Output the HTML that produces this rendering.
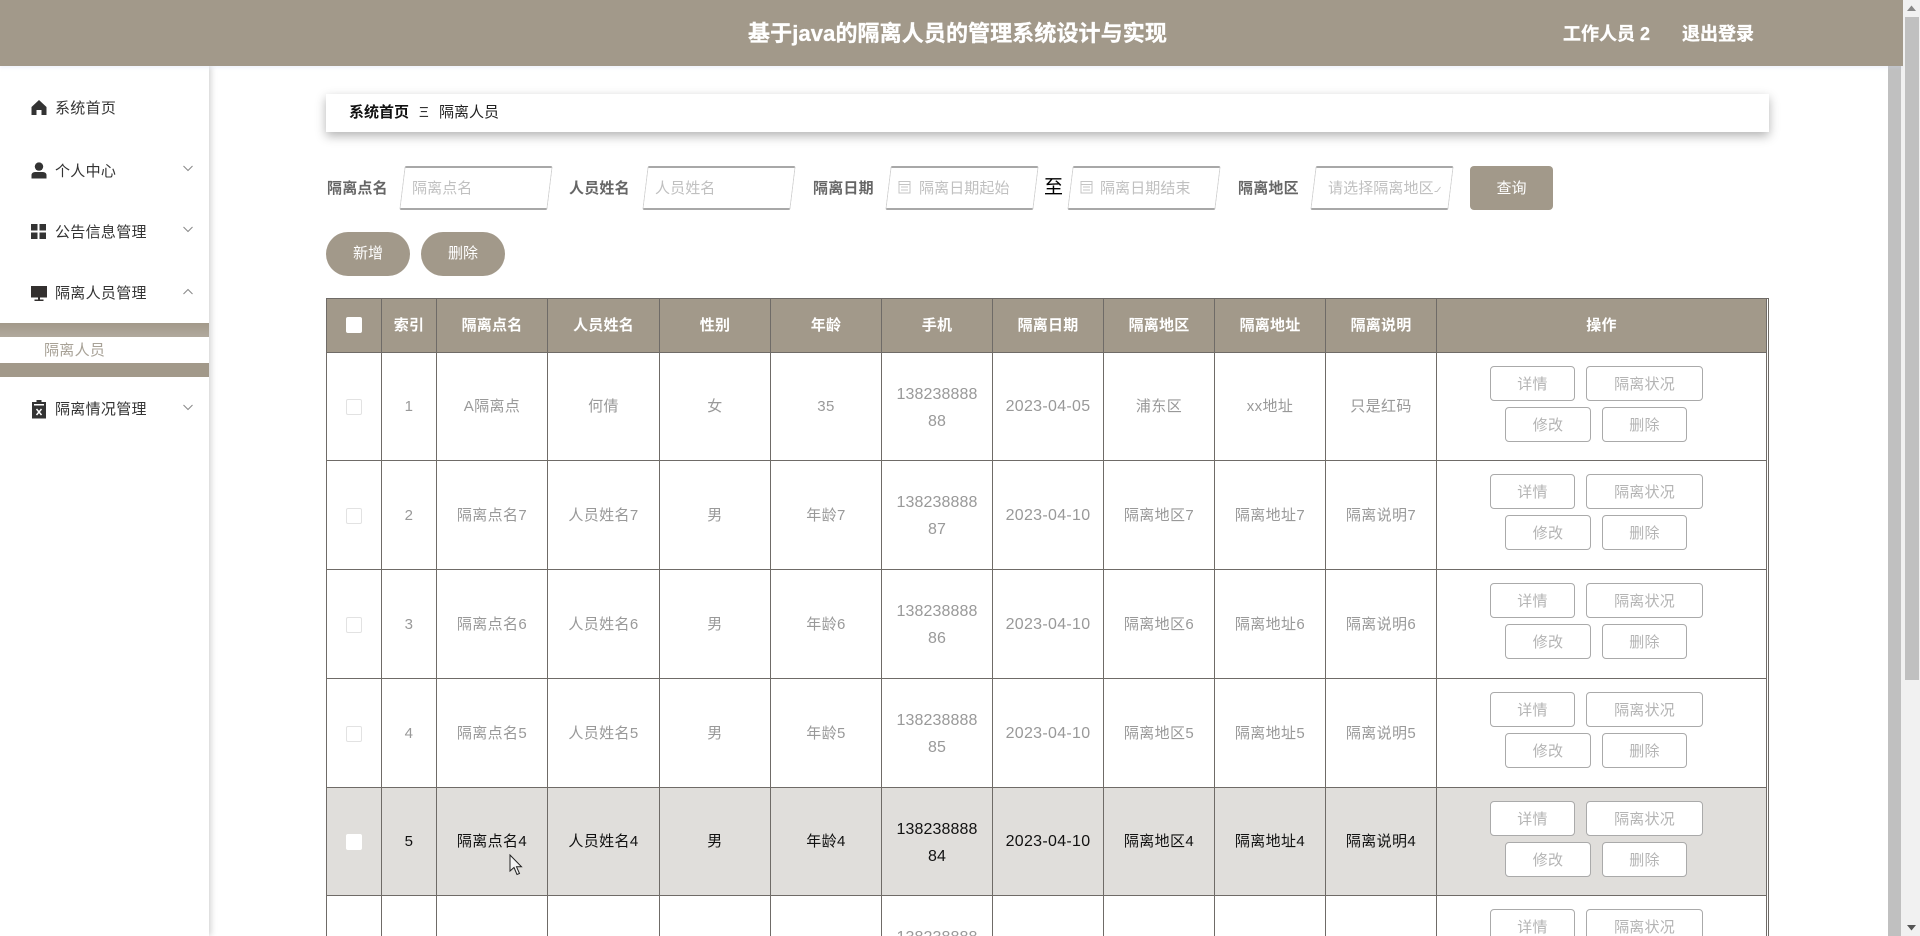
<!DOCTYPE html>
<html lang="zh">
<head>
<meta charset="utf-8">
<title>隔离人员</title>
<style>
html,body{margin:0;padding:0;width:1920px;height:936px;overflow:hidden;background:#fff;}
body{position:relative;font-family:"Liberation Sans","Noto Sans CJK SC",sans-serif;font-size:15px;color:#333;}
.a{position:absolute;white-space:nowrap;}
.hdr{left:0;top:0;width:1903px;height:66px;background:#a2998a;box-shadow:0 2px 3px rgba(200,210,240,.25);z-index:3;}
.side{left:0;top:66px;width:209px;height:870px;background:#fff;box-shadow:2px 0 6px rgba(0,0,0,.18);z-index:2;}
.mi{left:55px;line-height:22px;color:#333;font-size:15px;letter-spacing:.3px;z-index:4;}
.lb{font-weight:bold;color:#666;top:178px;line-height:22px;letter-spacing:.2px;}
.box{top:166px;height:40px;background:#fff;border-top:2px solid #a8a8a8;border-bottom:2px solid #a8a8a8;border-left:1px solid #cfcfcf;border-right:1px solid #cfcfcf;border-radius:2px;transform:skewX(-7deg);box-sizing:content-box;}
.ph{top:178px;line-height:22px;color:#c0c0c0;letter-spacing:.1px;}
.pill{top:232px;height:44px;width:84px;border-radius:22px;background:#a2998a;color:#fff;text-align:center;line-height:44px;}
table{position:absolute;left:326px;top:298px;border-collapse:collapse;table-layout:fixed;width:1440px;}
th,td{border:1px solid #6f6b67;text-align:center;vertical-align:middle;padding:0;font-size:15px;font-weight:normal;color:#999;position:relative;letter-spacing:.4px;}
th{background:#a2998a;color:#fff;font-weight:bold;height:51px;padding-bottom:2px;letter-spacing:.2px;}
td{line-height:27px;}
tr.h td{background:#e0dedb;color:#111;}
td.p{font-size:16px;letter-spacing:.1px;padding-top:2px;}
td.d{font-size:16px;letter-spacing:.3px;}
.cb{display:inline-block;width:14px;height:14px;border:1px solid #e2e2e2;border-radius:2px;background:#fff;vertical-align:middle;}
th .cb{border-color:#fff;}
tr.h .cb{border-color:#fff;}
.b{position:absolute;height:33px;line-height:35px;border:1px solid #aaa;border-radius:4px;background:#fff;color:#b4b4b4;box-sizing:content-box;letter-spacing:.2px;}
.b1{left:53px;top:12.5px;width:83px;}
.b2{left:149px;top:12.5px;width:115px;}
.b3{left:68px;top:53.5px;width:84px;}
.b4{left:165px;top:53.5px;width:83px;}
</style>
</head>
<body>
<div class="a hdr"></div>
<div class="a" style="left:0;top:16px;width:1915px;text-align:center;font-size:22px;font-weight:bold;color:#fff;line-height:36px;z-index:4;letter-spacing:.1px;-webkit-text-stroke:.3px #fff;">基于java的隔离人员的管理系统设计与实现</div>
<div class="a" style="left:1563px;top:21px;font-size:18px;font-weight:bold;color:#fff;line-height:26px;z-index:4;-webkit-text-stroke:.3px #fff;">工作人员 2</div>
<div class="a" style="left:1682px;top:21px;font-size:18px;font-weight:bold;color:#fff;line-height:26px;z-index:4;-webkit-text-stroke:.3px #fff;">退出登录</div>

<div class="a side"></div>
<svg class="a" style="left:31px;top:99px;z-index:4" width="16" height="17" viewBox="0 0 16 17"><path fill="#333" d="M8 1 L15.5 8 V16 H10.5 V11 H5.5 V16 H.5 V8 Z"/></svg>
<div class="a mi" style="top:98px;">系统首页</div>
<svg class="a" style="left:31px;top:162px;z-index:4" width="16" height="17" viewBox="0 0 16 17"><circle cx="8" cy="4.6" r="4.2" fill="#333"/><path fill="#333" d="M0.5 16.5 V13 C.5 11 2.5 10 4.5 10 H11.500 C13.500 10 15.500 11 15.500 13 V16.500 Z"/></svg>
<div class="a mi" style="top:161px;">个人中心</div>
<svg class="a" style="left:183px;top:165px;z-index:4" width="10" height="7" viewBox="0 0 10 7"><path d="M.5 1 L5 5.500 L9.500 1" fill="none" stroke="#888" stroke-width="1"/></svg>
<svg class="a" style="left:31px;top:224px;z-index:4" width="15" height="15" viewBox="0 0 15 15"><path fill="#333" d="M0 0H6.500V6.500H0ZM8.500 0H15V6.500H8.500ZM0 8.500H6.500V15H0ZM8.500 8.500H15V15H8.500Z"/></svg>
<div class="a mi" style="top:222px;">公告信息管理</div>
<svg class="a" style="left:183px;top:226px;z-index:4" width="10" height="7" viewBox="0 0 10 7"><path d="M.5 1 L5 5.500 L9.500 1" fill="none" stroke="#888" stroke-width="1"/></svg>
<svg class="a" style="left:31px;top:286px;z-index:4" width="16" height="16" viewBox="0 0 16 16"><path fill="#33302f" d="M0 0H16V11.500H0ZM7 11.500H9V13.500H12.500V15H3.500V13.500H7Z"/></svg>
<div class="a mi" style="top:283px;">隔离人员管理</div>
<svg class="a" style="left:183px;top:288px;z-index:4" width="10" height="7" viewBox="0 0 10 7"><path d="M.5 6 L5 1.500 L9.500 6" fill="none" stroke="#888" stroke-width="1"/></svg>
<div class="a" style="left:0;top:323px;width:209px;height:14px;background:linear-gradient(#a2998a,#b0a99d);z-index:4;"></div>
<div class="a" style="left:0;top:363px;width:209px;height:14px;background:#a2998a;z-index:4;"></div>
<div class="a mi" style="left:44px;top:340px;color:#a8a297;">隔离人员</div>
<svg class="a" style="left:31px;top:400px;z-index:4" width="16" height="19" viewBox="0 0 16 19"><path fill="#333" fill-rule="evenodd" d="M5.500 0H10.500V2H15V18.500H1V2H5.500ZM3 4 V5.500 H13 V4Z"/><path d="M5.500 9 L10.500 15 M10.500 9 L5.500 15" stroke="#fff" stroke-width="1.500"/></svg>
<div class="a mi" style="top:399px;">隔离情况管理</div>
<svg class="a" style="left:183px;top:404px;z-index:4" width="10" height="7" viewBox="0 0 10 7"><path d="M.5 1 L5 5.500 L9.500 1" fill="none" stroke="#888" stroke-width="1"/></svg>

<div class="a" style="left:326px;top:94px;width:1443px;height:38px;background:#fff;box-shadow:0 4px 10px rgba(0,0,0,.3);"></div>
<div class="a" style="left:349px;top:102px;font-weight:bold;color:#111;line-height:22px;">系统首页</div>
<div class="a" style="left:419px;top:102px;color:#333;line-height:22px;font-size:15px;">Ξ</div>
<div class="a" style="left:439px;top:102px;color:#222;line-height:22px;">隔离人员</div>

<div class="a lb" style="left:327px;">隔离点名</div>
<div class="a box" style="left:402px;width:146px;"></div>
<div class="a ph" style="left:412px;">隔离点名</div>
<div class="a lb" style="left:569px;">人员姓名</div>
<div class="a box" style="left:645px;width:146px;"></div>
<div class="a ph" style="left:655px;">人员姓名</div>
<div class="a lb" style="left:813px;">隔离日期</div>
<div class="a box" style="left:888px;width:146px;"></div>
<svg class="a" style="left:898px;top:180px" width="13" height="14" viewBox="0 0 13 14"><path d="M1 1.500H12V13H1ZM1 4.500H12M3 7H10M3 10H10" fill="none" stroke="#c4c4c4"/></svg>
<div class="a ph" style="left:919px;">隔离日期起始</div>
<div class="a" style="left:1044px;top:175px;font-size:19px;line-height:26px;color:#000;">至</div>
<div class="a box" style="left:1070px;width:146px;"></div>
<svg class="a" style="left:1080px;top:180px" width="13" height="14" viewBox="0 0 13 14"><path d="M1 1.500H12V13H1ZM1 4.500H12M3 7H10M3 10H10" fill="none" stroke="#c4c4c4"/></svg>
<div class="a ph" style="left:1100px;">隔离日期结束</div>
<div class="a lb" style="left:1238px;">隔离地区</div>
<div class="a box" style="left:1313px;width:136px;"></div>
<div class="a ph" style="left:1328px;">请选择隔离地区</div>
<svg class="a" style="left:1434px;top:186px" width="7" height="7" viewBox="0 0 7 7"><path d="M.5 5.500L3 5.500L6.500 1" fill="none" stroke="#c4c4c4"/></svg>
<div class="a" style="left:1470px;top:166px;width:83px;height:44px;border-radius:4px;background:#a2998a;color:#fff;text-align:center;line-height:46px;">查询</div>

<div class="a pill" style="left:326px;">新增</div>
<div class="a pill" style="left:421px;">删除</div>

<table>
<colgroup><col style="width:55px"><col style="width:55px"><col style="width:111px"><col style="width:112px"><col style="width:111px"><col style="width:111px"><col style="width:111px"><col style="width:111px"><col style="width:111px"><col style="width:111px"><col style="width:111px"><col style="width:330px"></colgroup>
<tr><th><span class="cb"></span></th><th>索引</th><th>隔离点名</th><th>人员姓名</th><th>性别</th><th>年龄</th><th>手机</th><th>隔离日期</th><th>隔离地区</th><th>隔离地址</th><th>隔离说明</th><th>操作</th></tr>
<tr style="height:108px"><td><span class="cb"></span></td><td>1</td><td>A隔离点</td><td>何倩</td><td>女</td><td>35</td><td class="p">138238888<br>88</td><td class="d">2023-04-05</td><td>浦东区</td><td>xx地址</td><td>只是红码</td><td><span class="b b1">详情</span><span class="b b2">隔离状况</span><span class="b b3">修改</span><span class="b b4">删除</span></td></tr>
<tr style="height:109px"><td><span class="cb"></span></td><td>2</td><td>隔离点名7</td><td>人员姓名7</td><td>男</td><td>年龄7</td><td class="p">138238888<br>87</td><td class="d">2023-04-10</td><td>隔离地区7</td><td>隔离地址7</td><td>隔离说明7</td><td><span class="b b1">详情</span><span class="b b2">隔离状况</span><span class="b b3">修改</span><span class="b b4">删除</span></td></tr>
<tr style="height:109px"><td><span class="cb"></span></td><td>3</td><td>隔离点名6</td><td>人员姓名6</td><td>男</td><td>年龄6</td><td class="p">138238888<br>86</td><td class="d">2023-04-10</td><td>隔离地区6</td><td>隔离地址6</td><td>隔离说明6</td><td><span class="b b1">详情</span><span class="b b2">隔离状况</span><span class="b b3">修改</span><span class="b b4">删除</span></td></tr>
<tr style="height:109px"><td><span class="cb"></span></td><td>4</td><td>隔离点名5</td><td>人员姓名5</td><td>男</td><td>年龄5</td><td class="p">138238888<br>85</td><td class="d">2023-04-10</td><td>隔离地区5</td><td>隔离地址5</td><td>隔离说明5</td><td><span class="b b1">详情</span><span class="b b2">隔离状况</span><span class="b b3">修改</span><span class="b b4">删除</span></td></tr>
<tr class="h" style="height:108px"><td><span class="cb"></span></td><td>5</td><td>隔离点名4</td><td>人员姓名4</td><td>男</td><td>年龄4</td><td class="p">138238888<br>84</td><td class="d">2023-04-10</td><td>隔离地区4</td><td>隔离地址4</td><td>隔离说明4</td><td><span class="b b1">详情</span><span class="b b2">隔离状况</span><span class="b b3">修改</span><span class="b b4">删除</span></td></tr>
<tr style="height:109px"><td><span class="cb"></span></td><td>6</td><td>隔离点名3</td><td>人员姓名3</td><td>男</td><td>年龄3</td><td class="p">138238888<br>83</td><td class="d">2023-04-10</td><td>隔离地区3</td><td>隔离地址3</td><td>隔离说明3</td><td><span class="b b1">详情</span><span class="b b2">隔离状况</span><span class="b b3">修改</span><span class="b b4">删除</span></td></tr>
</table>
<div class="a" style="left:1766px;top:298px;width:3px;height:1px;background:#6f6b67;"></div>
<div class="a" style="left:1768px;top:298px;width:1px;height:638px;background:#6f6b67;"></div>

<svg class="a" style="left:509px;top:854px;z-index:5" width="15" height="22" viewBox="0 0 15 22"><path d="M1 1V17L5 13.500L8 20.500L10.500 19.500L7.500 12.800H12.500Z" fill="#f4f4f4" stroke="#222" stroke-width="1"/></svg>

<div class="a" style="left:1888px;top:66px;width:13px;height:870px;background:#c0c0c0;"></div>
<div class="a" style="left:1901px;top:0;width:19px;height:936px;background:#f1f1f1;"></div>
<div class="a" style="left:1903px;top:0;width:17px;height:936px;background:#f1f1f1;z-index:5;"></div>
<div class="a" style="left:1905px;top:17px;width:14px;height:663px;background:#c0c0c0;z-index:6;"></div>
<svg class="a" style="left:1906px;top:5px;z-index:6" width="11" height="7" viewBox="0 0 11 7"><path d="M5.500 0.500L10 6H1Z" fill="#888"/></svg>
<svg class="a" style="left:1906px;top:924px;z-index:6" width="11" height="7" viewBox="0 0 11 7"><path d="M5.500 6.500L10 1H1Z" fill="#555"/></svg>
</body>
</html>
